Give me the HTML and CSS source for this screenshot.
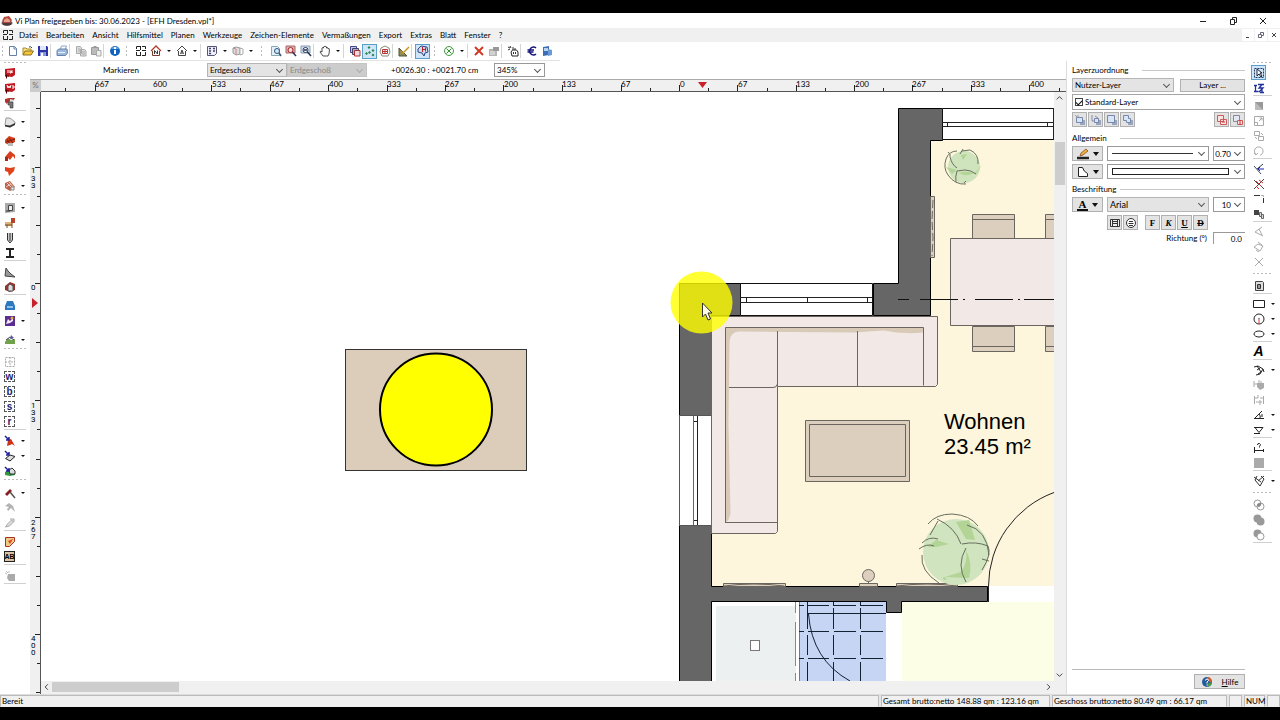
FILE: index.html
```html
<!DOCTYPE html>
<html lang="de">
<head>
<meta charset="utf-8">
<title>Vi Plan - EFH Dresden</title>
<link rel="stylesheet" href="styles.css">
</head>
<body>
<header class="titlebar">
  <svg class="app-icon" viewBox="0 0 12 12"><ellipse cx="6" cy="8" rx="5.5" ry="3" fill="#655"/><path d="M1 6L3 2l5-1 3 4-2 3H3z" fill="#b5483a"/><path d="M3 5l3-2 3 2v2H3z" fill="#e3a18f"/><path d="M2 8h8v2H2z" fill="#4a3a38"/></svg>
  <h1 class="title">Vi Plan freigegeben bis: 30.06.2023 - [EFH Dresden.vpl*]</h1>
  <div class="win-buttons">
    <button aria-label="Minimieren"><svg viewBox="0 0 12 12"><path d="M3 6.500h6" stroke="#222" fill="none"/></svg></button>
    <button aria-label="Wiederherstellen"><svg viewBox="0 0 12 12"><path d="M3.500 4.500h4v5h-4zM5.500 4.500v-2h4v5h-2" stroke="#222" fill="none"/></svg></button>
    <button aria-label="Schließen"><svg viewBox="0 0 12 12"><path d="M3 3l6 6M9 3l-6 6" stroke="#222" fill="none"/></svg></button>
  </div>
</header>
<nav class="menubar">
  <svg class="menu-icon" viewBox="0 0 12 12"><path d="M1.500 4V1.500H5M7 1.500h3.500V4M10.500 7v3.500H7M5 10.500H1.500V7M1 5.500h4M7 5.500h4M5.500 1v4M5.500 7v4" stroke="#222" fill="none"/></svg>
  <button>Datei</button><button>Bearbeiten</button><button>Ansicht</button><button>Hilfsmittel</button><button>Planen</button><button>Werkzeuge</button><button>Zeichen-Elemente</button><button>Vermaßungen</button><button>Export</button><button>Extras</button><button>Blatt</button><button>Fenster</button><button>?</button>
  <div class="mdi-buttons">
    <button aria-label="Fenster minimieren"><svg viewBox="0 0 12 12"><path d="M4 8.500h3" stroke="#444" fill="none"/></svg></button>
    <button aria-label="Fenster wiederherstellen"><svg viewBox="0 0 12 12"><path d="M3.500 5.500h3v3h-3zM5.500 5.500v-2h3v3h-2" stroke="#667" fill="none"/></svg></button>
    <button aria-label="Fenster schließen"><svg viewBox="0 0 12 12"><path d="M4 4l4 4M8 4L4 8" stroke="#444" fill="none"/></svg></button>
  </div>
</nav>
<div class="toolbar" role="toolbar" aria-label="Standard">
  <i class="grip first"></i>
  <button class="tool" aria-label="Neu"><svg viewBox="0 0 12 12"><path d="M2.500 1.500h5l2 2v7h-7z" fill="#fff" stroke="#667fa8"/><path d="M7 1.500v2.500h3" fill="none" stroke="#667fa8"/></svg></button>
  <button class="tool" aria-label="Öffnen"><svg viewBox="0 0 12 12"><path d="M1 10V3h3l1 1h4v2" fill="#fbe38a" stroke="#a88a22"/><path d="M1 10l2-4h8.500L9 10z" fill="#f5c63d" stroke="#8d7320"/><path d="M7 2q2-1 3 1" fill="none" stroke="#345"/></svg></button>
  <button class="tool" aria-label="Speichern"><svg viewBox="0 0 12 12"><path d="M1 1h9l1 1v9H1z" fill="#2c35a8"/><path d="M3 1h6v4H3z" fill="#dfe6fa"/><path d="M3 7h6v4H3z" fill="#8d98d8"/><path d="M4 8h2v3H4z" fill="#fff"/></svg></button>
  <i class="sep"></i>
  <button class="tool" aria-label="Drucken"><svg viewBox="0 0 12 12"><path d="M4 5l1.500-4h5L9 5z" fill="#fff" stroke="#8ba3c8"/><path d="M1 5.500L3 4h8l.5 4-2 2.500H1z" fill="#9db8dd" stroke="#6681aa"/><path d="M2 7.500h7" stroke="#e9f1ff"/></svg></button>
  <i class="sep"></i>
  <button class="tool" aria-label="Kopieren"><svg viewBox="0 0 12 12"><path d="M1.500 1.500h4l1 1v6h-5zM5.500 4.500h4l1.500 1.500v5H5.500z" fill="#ddd" stroke="#aaa"/><path d="M7 7h3M7 9h3M3 4h2M3 6h2" stroke="#aaa"/></svg></button>
  <button class="tool" aria-label="Einfügen"><svg viewBox="0 0 12 12"><path d="M1.500 2.500h7v7h-7z" fill="#bbb" stroke="#999"/><path d="M3.500 1h3v2h-3z" fill="#999"/><path d="M6.500 5.500h4.500v5.500H6.500z" fill="#eee" stroke="#aaa"/></svg></button>
  <i class="sep"></i>
  <button class="tool" aria-label="Info"><svg viewBox="0 0 12 12"><circle cx="6" cy="6" r="5" fill="#1264bd"/><path d="M2 4a4.500 4.500 0 0 1 8 0" fill="#5aa0e4"/><path d="M6 2v2M6 5v4" stroke="#fff" stroke-width="2"/></svg></button>
  <i class="grip"></i>
  <button class="tool" aria-label="Grundriss"><svg viewBox="0 0 12 12"><path d="M1.500 4V1.500H5M7 1.500h3.500V4M10.500 7v3.500H7M5 10.500H1.500V7M1 5.500h4M7 5.500h4M5.500 1v4M5.500 7v4" stroke="#222" fill="none"/></svg></button>
  <button class="tool" aria-label="Nordansicht"><svg viewBox="0 0 12 12"><path d="M1 6l5-5 5 5" fill="none" stroke="#b33b2b" stroke-width="1.300"/><path d="M2.500 6v4.500h7V6" fill="#fff" stroke="#7a3a30"/><path d="M4.500 9V5.500l3 3.500V5.500" fill="none" stroke="#333"/></svg></button>
  <button class="drop" aria-label="Ansichten"></button>
  <button class="tool" aria-label="Alle Ansichten"><svg viewBox="0 0 12 12"><path d="M1 6l5-5 5 5M2.500 6v4.500h7V6M4.500 9l1.500-4 1.500 4M5 8h2" fill="none" stroke="#444"/></svg></button>
  <button class="drop" aria-label="Weitere Ansichten"></button>
  <i class="sep"></i>
  <button class="tool" aria-label="Raster"><svg viewBox="0 0 12 12"><path d="M1.500 1.500h9v7l-2 2h-7z" fill="#eef" stroke="#557"/><path d="M3 3.500h2M7 3.500h2M3 6h2M7 6h2M3 8.500h2" stroke="#446" stroke-width="1.500"/></svg></button>
  <button class="drop" aria-label="Rasteroptionen"></button>
  <button class="tool" aria-label="3D"><svg viewBox="0 0 12 12"><path d="M1 3l3-1 4 1v6l-4 1-3-2z" fill="#ddd" stroke="#999"/><path d="M8 3l3 1v5l-3 1z" fill="#fff" stroke="#aaa"/><path d="M1 3l3 1v6" stroke="#c98a8a" fill="none"/></svg></button>
  <button class="drop wide" aria-label="3D-Optionen"></button>
  <i class="grip"></i>
  <button class="tool" aria-label="Alles zeigen"><svg viewBox="0 0 12 12"><path d="M1.500 1.500h6l2 2v7h-8z" fill="#e6eefa" stroke="#8aa"/><circle cx="7" cy="6" r="2.500" fill="#cfe6fb" stroke="#357"/><path d="M9 8l2 3" stroke="#357" stroke-width="1.500"/></svg></button>
  <button class="tool" aria-label="Vergrößern"><svg viewBox="0 0 12 12"><path d="M1 1h9v7H1z" fill="#d8b0b4" stroke="#a66"/><circle cx="5.500" cy="5" r="2.500" fill="#fbe0e4" stroke="#a22"/><path d="M7.500 7l3.500 4" stroke="#335" stroke-width="1.500"/></svg></button>
  <button class="tool" aria-label="Ausschnitt"><svg viewBox="0 0 12 12"><path d="M1 1h9v7H1z" fill="#cfe0f2" stroke="#89a"/><circle cx="5.500" cy="5" r="2.500" fill="#fff" stroke="#235"/><path d="M4 5h3M7.500 7l3.500 4" stroke="#235" stroke-width="1.500"/></svg></button>
  <i class="sep"></i>
  <button class="tool" aria-label="Verschieben"><svg viewBox="0 0 12 12"><path d="M4 11L1 7q0-1.500 2 0V3q1-1 1.500 0V2q1-1.500 1.500 0 1-1.500 1.500 0v1q1-1 1.500 0v1q1.500-1 1.500 .5L10 9l-1 2z" fill="#fff" stroke="#222" stroke-width=".8"/></svg></button>
  <button class="drop" aria-label="Verschiebeoptionen"></button>
  <i class="sep"></i>
  <button class="tool" aria-label="Layer"><svg viewBox="0 0 12 12"><path d="M1.500 1.500h6v6h-6z" fill="#c7c7ea" stroke="#448"/><path d="M3.500 3.500h6v6h-6z" fill="#aac" stroke="#446"/><path d="M5.500 5.500h5.500v5.500H5.500z" fill="#f2d8dc" stroke="#a33"/></svg></button>
  <button class="tool on" aria-label="Fangpunkte"><svg viewBox="0 0 12 12"><path d="M5 1l1.500 1.500L5 4 3.500 2.500zM2.500 7L4 8.500 2.500 10 1 8.500zM9 4l1.500 1.500L9 7 7.500 5.500zM9 8.500l1.500 1.500L9 11.500 7.500 10zM5.500 6L7 7.500 5.500 9 4 7.500z" fill="#27864a"/></svg></button>
  <button class="tool" aria-label="Umriss"><svg viewBox="0 0 12 12"><path d="M6 1l4 2 1 4-2 4H3L1 7l1-4z" fill="none" stroke="#887"/><path d="M3.500 4.500h5v4h-5zM6 4.500v4M4 6.500h4" fill="none" stroke="#b33"/></svg></button>
  <i class="sep"></i>
  <button class="tool" aria-label="Messen"><svg viewBox="0 0 12 12"><path d="M1 3v8h8z" fill="#8b8b5c" stroke="#553"/><path d="M3 6l2 2 6-6" fill="none" stroke="#c9951c" stroke-width="1.500"/></svg></button>
  <i class="sep"></i>
  <button class="tool on" aria-label="3D-Körper"><svg viewBox="0 0 12 12"><path d="M1 4l3-3 6 1 1 5-3 1-1 3-2-3-4-1z" fill="#cfdcf0" stroke="#348"/><path d="M5.500 2v5M5 4.500h4M8.500 2.500v4" stroke="#b22" fill="none"/></svg></button>
  <i class="grip"></i>
  <button class="tool" aria-label="Symbol"><svg viewBox="0 0 12 12"><circle cx="6" cy="6" r="4.500" fill="#f2fff2" stroke="#4a9a4a"/><path d="M3.500 3.500l5 5M8.500 3.500l-5 5" stroke="#3c8c3c"/></svg></button>
  <button class="drop" aria-label="Symboloptionen"></button>
  <i class="sep"></i>
  <button class="tool" aria-label="Löschen"><svg viewBox="0 0 12 12"><path d="M2 2l8 8M10 2L2 10" stroke="#cf3a26" stroke-width="2" fill="none"/></svg></button>
  <button class="tool" aria-label="Eigenschaften"><svg viewBox="0 0 12 12"><path d="M1 4h8v7H1z" fill="#b5b5b5"/><path d="M5 2h6v4H5z" fill="#999"/><path d="M2 7h5M2 9h5" stroke="#eee"/></svg></button>
  <i class="sep"></i>
  <button class="tool" aria-label="Hand"><svg viewBox="0 0 12 12"><path d="M5 11L4 7l1.500-2h4L11 7v4z" fill="#fff" stroke="#222"/><path d="M1 2l2 1M3 1l1 2M1 5l2-1M6 5V2M8 5V3M6.500 7v2M8.500 7v2" stroke="#333"/></svg></button>
  <i class="sep"></i>
  <button class="tool" aria-label="Kosten"><svg viewBox="0 0 12 12"><path d="M10 3a3.800 4 0 1 0 0 6M1.500 5h6.500M1.500 7h6" fill="none" stroke="#16167c" stroke-width="1.500"/></svg></button>
  <button class="tool" aria-label="Raumbuch"><svg viewBox="0 0 12 12"><path d="M2 2l6-1v9l-6 1z" fill="#3d6fb4"/><path d="M3 3h4v3H3z" fill="#b8d3ef"/><path d="M7 4l4 1v5l-4 1z" fill="#6b9ad6"/></svg></button>
</div>
<main class="workspace">
  <div class="sidebar" role="toolbar" aria-label="Bauteile">
    <i class="hgrip"></i>
    <div class="row"><button class="tool" aria-label="Außenwand"><svg viewBox="0 0 12 12"><path d="M1 2l10-1v7l-3 2-7-1z" fill="#c41820"/><path d="M4 3v3M6 3v3h1V4l1 2V3" stroke="#fff" fill="none"/><path d="M1 9h4M2.500 7.500v4" stroke="#500"/></svg></button></div>
    <div class="row"><button class="tool" aria-label="Innenwand"><svg viewBox="0 0 12 12"><path d="M1 2l10-1v7l-3 2-7-1z" fill="#c41820"/><path d="M3 3l1 3 1-2 1 2 1-3M8 6h2V4H8" stroke="#fff" fill="none"/><path d="M1 9h4M2.500 7.500v4" stroke="#500"/></svg></button></div>
    <div class="row"><button class="tool" aria-label="Durchbruch"><svg viewBox="0 0 12 12"><path d="M1 2l4-1h6L9 4 4 5 3 7 1 5z" fill="#b0332c"/><path d="M6 2l4 1-1 2H6z" fill="#ddd"/><path d="M4 5h5v6H6V8H4z" fill="#777" stroke="#333" stroke-width=".6"/></svg></button></div>
    <i class="hsep"></i>
    <div class="row"><button class="tool" aria-label="Decke"><svg viewBox="0 0 12 12"><path d="M1 9l1-7h4l5 4v2l-5 3z" fill="#e4e4e4" stroke="#999"/><path d="M1 9l5 .5L11 7v2l-5 2.500-5-1z" fill="#333"/></svg></button><button class="drop" aria-label="Mehr"></button></div>
    <i class="hsep blank"></i>
    <div class="row"><button class="tool" aria-label="Dach"><svg viewBox="0 0 12 12"><path d="M1 5l4-4 6 2v4L5 10 1 8z" fill="#d2421e"/><path d="M3 4l3 5M5 3l4 5M2 7l9-3" stroke="#7b1e10"/><path d="M4 8h5v3H4z" fill="#bbb"/></svg></button><button class="drop" aria-label="Mehr"></button></div>
    <div class="row"><button class="tool" aria-label="Gaube"><svg viewBox="0 0 12 12"><path d="M1 7l5-6 5 4v4L9 6l-3 4-2-2-3 2z" fill="#d7401e"/><path d="M1 7h3v4H1z" fill="#9b2d18"/></svg></button><button class="drop" aria-label="Mehr"></button></div>
    <div class="row"><button class="tool" aria-label="Dachfläche"><svg viewBox="0 0 12 12"><path d="M1 2l5 1 5-1-1 4-5 5-1-4-3-1z" fill="#e0431b"/></svg></button></div>
    <div class="row"><button class="tool" aria-label="Dachöffnung"><svg viewBox="0 0 12 12"><path d="M1 3l5-2 5 6-5 4-5-3z" fill="#bf6149"/><path d="M3 3l4 4M5 2l5 6M2 7l5-3" stroke="#ead0c6"/><path d="M7 7h3v3H7z" fill="#eee" stroke="#888"/></svg></button><button class="drop" aria-label="Mehr"></button></div>
    <i class="hgrip"></i>
    <div class="row"><button class="tool" aria-label="Fenster"><svg viewBox="0 0 12 12"><path d="M1 1h10v9L1 11z" fill="#aaa"/><path d="M4.500 3.500h4v5h-4z" fill="#eee" stroke="#444"/><path d="M2 9h4" stroke="#333"/></svg></button><button class="drop" aria-label="Mehr"></button></div>
    <div class="row"><button class="tool" aria-label="Treppe"><svg viewBox="0 0 12 12"><path d="M1 5h7v4H1z" fill="#dcb37b"/><path d="M7 1h4v5H7z" fill="#b5442a"/><path d="M1 8h7M3 8v3M8 6v5" stroke="#7c4a20"/></svg></button></div>
    <div class="row"><button class="tool" aria-label="Schornstein"><svg viewBox="0 0 12 12"><path d="M3.500 1v7L6 11l2.500-3V1M6 1v8" fill="#ccc" stroke="#333"/></svg></button></div>
    <div class="row"><button class="tool" aria-label="Träger"><svg viewBox="0 0 12 12"><path d="M2 2h8M2 10h8M6 2v8" stroke="#222" stroke-width="2"/></svg></button></div>
    <i class="hsep"></i>
    <div class="row"><button class="tool" aria-label="Gelände"><svg viewBox="0 0 12 12"><path d="M1 10l1-8 2 3 3 3 4 3z" fill="#999" stroke="#444"/></svg></button></div>
    <div class="row"><button class="tool" aria-label="Raum"><svg viewBox="0 0 12 12"><path d="M1 5l5-4 5 2v6l-5 2-5-2z" fill="#93332b"/><path d="M4 10V5l2-2 3 2v5z" fill="#ddd" stroke="#555"/></svg></button></div>
    <i class="hsep"></i>
    <div class="row"><button class="tool" aria-label="Möbel"><svg viewBox="0 0 12 12"><path d="M3 1h6l2 5v4H1V6z" fill="#2e78bd"/><path d="M3 6h6v2H3z" fill="#8fc1ee"/></svg></button></div>
    <div class="row"><button class="tool" aria-label="Textur"><svg viewBox="0 0 12 12"><path d="M1 1h10v10H1z" fill="#5b2d91"/><path d="M2 9l2-5 2 2 3-3v3L6 8z" fill="#f1e9ff"/><circle cx="8" cy="3" r="1.500" fill="#e7a92d"/></svg></button><button class="drop" aria-label="Mehr"></button></div>
    <i class="hsep blank"></i>
    <div class="row"><button class="tool" aria-label="Landschaft"><svg viewBox="0 0 12 12"><path d="M1 8l3-4 3 2 4-1v5H1z" fill="#6fa24a"/><path d="M2 6l4-3 4 3" stroke="#546" fill="none"/><path d="M7 1l3 3-4 1z" fill="#55a"/></svg></button><button class="drop" aria-label="Mehr"></button></div>
    <i class="hgrip"></i>
    <div class="row"><button class="tool" aria-label="Gitter"><svg viewBox="0 0 12 12"><path d="M1.500 1.500h9v9h-9zM1 6h10M6 1v10" fill="none" stroke="#aaa" stroke-dasharray="2 1"/></svg></button></div>
    <div class="row"><button class="tool boxed" aria-label="Wand bearbeiten">w</button></div>
    <div class="row"><button class="tool boxed" aria-label="Bauteil bearbeiten">b</button></div>
    <div class="row"><button class="tool boxed" aria-label="Symbol bearbeiten">s</button></div>
    <div class="row"><button class="tool boxed" aria-label="Raum bearbeiten">r</button></div>
    <i class="hsep"></i>
    <div class="row"><button class="tool" aria-label="Dach wählen"><svg viewBox="0 0 12 12"><path d="M3 11l1-6 3-1 4 7-3-2-2 1z" fill="#cf3018"/><path d="M1 1l4 4M5 2v3H2" stroke="#22229a" stroke-width="1.500" fill="none"/></svg></button><button class="drop" aria-label="Mehr"></button></div>
    <div class="row"><button class="tool" aria-label="Decke wählen"><svg viewBox="0 0 12 12"><path d="M1.500 8.500L6 5l5 1.500L6 11z" fill="#ddd" stroke="#222"/><path d="M1 1l4 4M5 2v3H2" stroke="#22229a" stroke-width="1.500" fill="none"/></svg></button><button class="drop" aria-label="Mehr"></button></div>
    <div class="row"><button class="tool" aria-label="Gelände wählen"><svg viewBox="0 0 12 12"><path d="M1 7l5-3 5 2v4l-5 1-5-1z" fill="#2e9a3d"/><path d="M5 5l3-2 3 3v3H6z" fill="#ddd" stroke="#333"/><path d="M1 2l4 4M5 3v3H2" stroke="#22229a" stroke-width="1.500" fill="none"/></svg></button></div>
    <i class="hgrip"></i>
    <div class="row"><button class="tool" aria-label="Hammer"><svg viewBox="0 0 12 12"><path d="M1 7l5-5 2 2-5 5z" fill="#8e1d22"/><path d="M6 5l5 6" stroke="#555" stroke-width="1.500"/></svg></button><button class="drop" aria-label="Mehr"></button></div>
    <div class="row"><button class="tool" aria-label="Trennen"><svg viewBox="0 0 12 12"><path d="M1 4l4-3 4 3 2 6-4-4-3 3-1-2 2-2z" fill="#b3b3b3"/></svg></button></div>
    <div class="row"><button class="tool" aria-label="Verbinden"><svg viewBox="0 0 12 12"><path d="M1.500 10l2-3 4-4 2 2-4 4zM6 2h4v3" stroke="#aaa" fill="#ddd"/></svg></button></div>
    <i class="hsep"></i>
    <div class="row"><button class="tool" aria-label="Fläche"><svg viewBox="0 0 12 12"><path d="M1.500 1.500h9v4l-5 5h-4z" fill="#f0c987" stroke="#a63322"/><path d="M4 5l5-2-3 5z" fill="#d84c24"/></svg></button></div>
    <div class="row"><button class="tool ab" aria-label="Beschriften">AB</button></div>
    <i class="hsep"></i>
    <div class="row"><button class="tool" aria-label="Schieben"><svg viewBox="0 0 12 12"><path d="M4 4h7v7H5L3 8z" fill="#aaa"/><path d="M1 3l2 1M2 1l2 2M5 1v2" stroke="#bbb"/></svg></button></div>
    <i class="hsep"></i>
  </div>

  <section class="center">
    <div class="options">
      <span class="mode">Markieren</span>
      <span class="pick floor"><select aria-label="Geschoß"><option>Erdgeschoß</option></select></span>
      <span class="pick floor off"><select aria-label="Vergleichsgeschoß" disabled><option>Erdgeschoß</option></select></span>
      <output class="coords">+0026.30 : +0021.70 cm</output>
      <span class="pick white zoom"><select aria-label="Zoom"><option>345%</option></select></span>
    </div>
    <div class="board">
      <div class="corner">%</div>
      <svg class="ruler-h" aria-label="Lineal waagerecht">
        <g transform="translate(-41 -80)">
          <path d="M65.500 92v-4M124.500 92v-4M182.500 92v-4M240.500 92v-4M299.500 92v-4M357.500 92v-4M416.500 92v-4M474.500 92v-4M533.500 92v-4M591.500 92v-4M650.500 92v-4M708.500 92v-4M767.500 92v-4M825.500 92v-4M883.500 92v-4M942.500 92v-4M1000.500 92v-4M1059.500 92v-4" class="tick"/>
          <path d="M95.500 92v-7M211.500 92v-7M270.500 92v-7M328.500 92v-7M387.500 92v-7M445.500 92v-7M503.500 92v-7M562.500 92v-7M621.500 92v-7M679.500 92v-7M737.500 92v-7M796.500 92v-7M854.500 92v-7M912.500 92v-7M971.500 92v-7M1029.500 92v-7" class="tick"/>
          <g class="scale"><text x="95" y="87">667</text><text x="153" y="87">600</text><text x="212" y="87">533</text><text x="270" y="87">467</text><text x="329" y="87">400</text><text x="387" y="87">333</text><text x="445" y="87">267</text><text x="504" y="87">200</text><text x="562" y="87">133</text><text x="621" y="87">67</text><text x="680" y="87">0</text><text x="738" y="87">67</text><text x="796" y="87">133</text><text x="855" y="87">200</text><text x="912" y="87">267</text><text x="971" y="87">333</text><text x="1030" y="87">400</text></g>
          <path d="M698 82h9l-4.500 6z" fill="#c8202a"/>
        </g>
      </svg>
      <svg class="ruler-v" aria-label="Lineal senkrecht">
        <g transform="translate(-30 -92)">
          <path d="M41 108.500h-5M41 137.500h-4M41 167.500h-6M41 196.500h-4M41 225.500h-5M41 254.500h-4M41 283.500h-6M41 313.500h-4M41 342.500h-5M41 371.500h-4M41 400.500h-6M41 429.500h-4M41 459.500h-5M41 488.500h-4M41 517.500h-6M41 546.500h-4M41 576.500h-5M41 605.500h-4M41 634.500h-6M41 663.500h-4M41 692.500h-5" class="tick"/>
          <g class="scale upright"><text y="173"><tspan x="31">1</tspan><tspan x="31" dy="8">3</tspan><tspan x="31" dy="7">3</tspan></text><text x="31" y="290">0</text><text y="408"><tspan x="31">1</tspan><tspan x="31" dy="7">3</tspan><tspan x="31" dy="7">3</tspan></text><text y="525"><tspan x="31">2</tspan><tspan x="31" dy="7">6</tspan><tspan x="31" dy="7">7</tspan></text><text y="641"><tspan x="31">4</tspan><tspan x="31" dy="7">0</tspan><tspan x="31" dy="7">0</tspan></text></g>
          <path d="M32 298v10l6-5z" fill="#c8202a"/>
        </g>
      </svg>
      <svg class="plan" aria-label="Grundriss EFH Dresden">
        <g transform="translate(-41 -92)" fill="none" stroke-width="1">
          <rect x="345.500" y="349.500" width="181" height="121" fill="#dccdbb" stroke="#333"/>
          <circle cx="436" cy="409.500" r="56" fill="#ff0" stroke="#000" stroke-width="2"/>

          <path d="M930 140h124v446H711V315h219z" fill="#fdf5dc"/>
          <path d="M902 602h152v79H902z" fill="#fcfee6"/>
          <path d="M716 606h80v75h-80z" fill="#ecf0f1"/>
          <path d="M799 602h87v79h-87z" fill="#c5d5f3"/>
          <path d="M795.500 602v11M795.500 622v44M795.500 673v8" stroke="#888"/><path d="M799.500 602v79" stroke="#778"/>
          <path d="M799 605.500h5M808 605.500h21M834 605.500h22M861 605.500h22M799 631.500h5M808 631.500h21M834 631.500h22M861 631.500h22M799 658.500h5M808 658.500h21M834 658.500h22M861 658.500h22M807.500 602v27M807.500 635v20M807.500 662v19M833.500 602v4M833.500 608v21M833.500 635v20M833.500 662v19M860.500 602v4M860.500 608v21M860.500 635v20M860.500 662v19" stroke="#123"/>
          <path d="M808 613.500h78M808.500 614Q812 660 850 681" stroke="#123"/>
          <rect x="750.500" y="640.500" width="9" height="10" stroke="#777" fill="#fff"/>

          <path d="M898.500 108.500h44v32h-12v175h-57v-32h25zM679.500 283.500h61v32h-29v100h-32zM679.500 683V525.500h32v61h276v15h-86v11h-15v-11h-175V683z" fill="#666" stroke="#000"/>
          <path d="M942.500 108.500h111v31h-111zM740.500 283.500h132v32h-132z" fill="#fff" stroke="#111"/>
          <path d="M679.500 415.500h32v110h-32z" fill="#fff" stroke="#555"/>
          <path d="M942 122.500h111M942 126.500h111M947.500 122v5M1047.500 122v5M1053.500 108v32M740 297.500h132M740 302.500h132M746.500 297v5M807.500 297v5M867.500 297v5M697.500 416v109M693 421.500h5M693 520.500h5" stroke="#222"/>
          <path d="M693.500 416v109" stroke="#666"/>

          <g stroke="#6b655f">
            <path d="M930.500 196.500h4v61h-4z" fill="#dccfbd"/><path d="M933 200l-1 20 1 18-1 18" stroke-dasharray="8 3"/>
            <path d="M972.500 214.500h42v24h-42zM972 219.500h43M1045.500 214.500h12v24h-12zM1045 219.500h12M972.500 326.500h42v25h-42zM972 346.500h43M1045.500 326.500h12v25h-12zM1045 346.500h12" fill="#dccfbd"/>
            <path d="M950.500 238.500h106v87h-106z" fill="#f2e9e7"/>
            <path d="M711.500 316.500h226v68l-2 2h-158v145l-2 2h-64z" fill="#f2e9e7"/>
            <path d="M725.500 522V327.500h198v5q-20 2-40-2l-30 2-112-1q-12-1-12 12l-1 80 2 90q-2 8-4 8z" fill="#d9cab8" stroke="none"/>
            <path d="M725.500 522.500v-195h198v58M725 522.500h52M777.500 331v55M857.500 331v55M729 387.500h44q4 0 4-3"/>
            <path d="M805.500 420.500h104v61h-104zM809.500 424.500h96v52h-96z" fill="#dccfbd"/>
            <path d="M723.500 583.500h62v3h-62zM896.500 583.500h61v3h-61zM859.500 583.500h18v3h-18z" fill="#dccfbd"/>
            <path d="M724 586q30-4 60 0M897 586q30-4 60 0M868.500 581v3"/>
            <circle cx="868.500" cy="575.500" r="6" fill="#dccfbd"/>
          </g>

          <circle cx="964" cy="167" r="16" fill="#cfe3bc"/>
          <path d="M961 155l6-1-4 6zM946 167l11 3-5 4zM959 173q9-3 17 1l6-9-6 7q-8 6-17 1z" fill="#b2d495"/>
          <path d="M957 151q-8 0-11 8-3 9 2 16 7 10 18 9M948 152q3 2 2 5 2 8 7 11M960 154l3-5M962 151l8-1q9 4 8 14M957 171l8-1q6 0 11 4M957 171q-2 6-1 11M964 183l2-2" stroke="#67705f"/>

          <circle cx="956" cy="552" r="33" fill="#d0e4bf"/>
          <path d="M956 522l13-2 6 20-9-1zM928 547l8-7 13 4-13 3zM966 550q7 14 3 28l-24-1 16-5q7-10 5-22zM945 577q-6 2 2 3z" fill="#b2d495"/>
          <path d="M928 524q8-10 24-10 18 1 26 12M937 519q18 8 24 25M930 535l8-14M922 543q7-7 16-4M919 549q8-6 15-3M962 544q14-3 26 2 4 8-6 24M966 548q-10 17 0 34M922 555q-2 16 17 28M967 525q20 5 22 30M982 559l7 2" stroke="#666e5c"/>
          <path d="M988.500 586A100 100 0 0 1 1054 492.500M988.500 586v16" stroke="#222"/>
          <path d="M898 299.500h11M920 299.500h38M963 299.500h2M975 299.500h38M1018 299.500h2M1024 299.500h31" stroke="#111"/>
          <g class="room"><text x="944" y="429">Wohnen</text><text x="944" y="454">23.45 m²</text></g>

          <circle cx="701.500" cy="302.500" r="31" fill="#ff0" fill-opacity=".8"/>
          <path d="M702.500 303v14l3-3 2.500 6 2.500-1-2.500-6h4z" fill="#fffbe0" stroke="#333"/>
        </g>
      </svg>
      <div class="scroll-v" aria-hidden="true"><svg viewBox="0 0 12 12"><path d="M3 7.500l3-3 3 3"/></svg><i class="thumb-v"></i><svg viewBox="0 0 12 12"><path d="M3 4.500l3 3 3-3"/></svg></div>
      <div class="scroll-h" aria-hidden="true"><svg viewBox="0 0 12 12"><path d="M7.500 3l-3 3 3 3"/></svg><i class="thumb-h"></i><svg viewBox="0 0 12 12"><path d="M4.500 3l3 3-3 3"/></svg></div>
    </div>
  </section>

  <aside class="props">
    <h2 class="group wide">Layerzuordnung</h2>
    <div class="line gap6">
      <span class="pick grow"><select aria-label="Layertyp"><option>Nutzer-Layer</option></select></span>
      <button class="btn layer">Layer ...</button>
    </div>
    <div class="combo"><input type="checkbox" id="std" checked><label for="std">Standard-Layer</label></div>
    <div class="line icons">
      <button class="btn sq" aria-label="Nach vorn"><svg viewBox="0 0 12 12"><path d="M6 6h5v5H6z" fill="#99a4c0"/><path d="M2.500 3.500h6v5h-6z" fill="#d9e4f6" stroke="#7788ad"/><path d="M1 1l2 2M4 1v2" stroke="#99a"/></svg></button>
      <button class="btn sq" aria-label="Nach oben"><svg viewBox="0 0 12 12"><path d="M6 6h5v5H6z" fill="#99a4c0"/><path d="M4.500 4.500h4v4h-4z" fill="#d9e4f6" stroke="#7788ad"/><path d="M2 1v6h3M5 2l3 2" fill="none" stroke="#88a"/></svg></button>
      <button class="btn sq" aria-label="Nach unten"><svg viewBox="0 0 12 12"><path d="M6 6h5v5H6z" fill="#99a4c0"/><path d="M1.500 1.500h7v7h-7z" fill="#d9e4f6" stroke="#7788ad"/></svg></button>
      <button class="btn sq" aria-label="Nach hinten"><svg viewBox="0 0 12 12"><path d="M6 6h5v5H6z" fill="#99a4c0"/><path d="M1.500 1.500h5v3h2v4h-4v-2h-3z" fill="#d9e4f6" stroke="#7788ad"/></svg></button>
      <i class="fill"></i>
      <button class="btn sq" aria-label="Gruppieren"><svg viewBox="0 0 12 12"><path d="M1.500 1.500h6v6h-6zM4.500 5.500h6v5h-6z" fill="#fbe3e3" stroke="#cc5b5b"/><path d="M6 8h3" stroke="#c33"/></svg></button>
      <button class="btn sq" aria-label="Gruppe auflösen"><svg viewBox="0 0 12 12"><path d="M1.500 1.500h6v6h-6z" fill="#e3e8f6" stroke="#889"/><path d="M5.500 6.500h5v4h-5z" fill="#fbe3e3" stroke="#cc5b5b"/><path d="M8 6v5" stroke="#c33"/></svg></button>
    </div>
    <h2 class="group">Allgemein</h2>
    <div class="line gap4">
      <button class="btn split" aria-label="Linienfarbe"><svg viewBox="0 0 12 12"><path d="M3 8l1-3 5-4 2 2-5 4z" fill="#e8b53a" stroke="#8a3b22" stroke-width=".7"/><path d="M0 10h12" stroke="#222" stroke-width="2.500"/></svg></button>
      <span class="pick white grow"><select aria-label="Linienart"><option></option></select><i class="stroke"></i></span>
      <span class="pick white num"><select aria-label="Linienstärke"><option>0.70</option></select></span>
    </div>
    <div class="line gap4">
      <button class="btn split" aria-label="Füllung"><svg viewBox="0 0 12 12"><path d="M1.500 10.500v-9h4q1 4 5 6v3z" fill="#fff" stroke="#222"/></svg></button>
      <span class="pick white grow"><select aria-label="Füllart"><option></option></select><i class="swatch"></i></span>
    </div>
    <h2 class="group">Beschriftung</h2>
    <div class="line gap4">
      <button class="btn split letter" aria-label="Schriftfarbe"><b>A</b></button>
      <span class="pick grow font"><select aria-label="Schriftart"><option>Arial</option></select></span>
      <span class="pick white num"><select aria-label="Schriftgröße"><option>10</option></select></span>
    </div>
    <div class="line styles">
      <button class="btn sq" aria-label="Rahmen"><svg viewBox="0 0 12 12"><path d="M1.500 2.500h9v7h-9zM3.500 2.500v7M8.500 2.500v7M4 4.500h4M4 6.500h4" fill="#eee" stroke="#333"/></svg></button>
      <button class="btn sq" aria-label="Kreis"><svg viewBox="0 0 12 12"><circle cx="6" cy="6" r="4.500" fill="#fff" stroke="#333"/><path d="M4 4.500h4M3.500 6.500h5M4 8.500h4" stroke="#333"/></svg></button>
      <i class="gap"></i>
      <button class="btn sq bold" aria-label="Fett">F</button>
      <button class="btn sq bold ital" aria-label="Kursiv">K</button>
      <button class="btn sq bold under" aria-label="Unterstrichen">U</button>
      <button class="btn sq bold strike" aria-label="Durchgestrichen">D</button>
    </div>
    <div class="line angle"><label for="dir">Richtung (°)</label><input id="dir" type="text" value="0.0"></div>
    <div class="help"><button class="btn"><svg viewBox="0 0 12 12"><circle cx="6" cy="6" r="5" fill="#235a9a"/><path d="M6 1a5 5 0 0 1 5 5H8z" fill="#d85a28"/><path d="M11 6a5 5 0 0 1-5 5V8z" fill="#4a9a3d"/><path d="M4.500 4.500q0-1.500 1.500-1.500t1.500 1.500L6 6v1.500M6 8.500v1" fill="none" stroke="#fff"/></svg><span><u>H</u>ilfe</span></button></div>
  </aside>

  <div class="sidebar right" role="toolbar" aria-label="Zeichnen">
    <i class="hgrip"></i>
    <div class="row"><button class="tool on" aria-label="Auswahl"><svg viewBox="0 0 12 12"><path d="M1.500 1.500h9v9h-9z" fill="none" stroke="#223a66" stroke-dasharray="2 1"/><path d="M4 2v7l2-2 2 3 1-1-2-3h2z" fill="#fff" stroke="#223"/></svg></button></div>
    <div class="row"><button class="tool" aria-label="Auswahl erweitert"><svg viewBox="0 0 12 12"><path d="M2.500 3.500v6h3M1 3.500h3M1 9.500h3M5 2.500h6M9.500 2L6 6l4 0-4 4M9 7v4M7 10.500h4" fill="none" stroke="#20309a" stroke-width="1.300"/></svg></button></div>
    <i class="hsep"></i>
    <div class="row"><button class="tool" aria-label="Verlauf"><svg viewBox="0 0 12 12"><path d="M2 2h8v8H2z" fill="#bbb"/><path d="M2 2l8 8V2z" fill="#999"/></svg></button></div>
    <div class="row"><button class="tool" aria-label="Skalieren"><svg viewBox="0 0 12 12"><path d="M1.500 1.500h9v9h-9zM1.500 7.500h3v3M6 6l3-3M6.500 3H9v2.500" fill="none" stroke="#aaa"/></svg></button></div>
    <div class="row"><button class="tool" aria-label="Kopie"><svg viewBox="0 0 12 12"><path d="M1.500 1.500h5v4h-5zM5.500 6.500h5v4h-5zM2 7l2 2M8 3l2 2" fill="none" stroke="#aaa"/></svg></button></div>
    <div class="row"><button class="tool" aria-label="Drehen"><svg viewBox="0 0 12 12"><path d="M3 9.500A4.300 4.300 0 1 1 7 10.300M1 8l2 2 2-2" fill="none" stroke="#aaa"/></svg></button></div>
    <i class="hsep"></i>
    <div class="row"><button class="tool" aria-label="Winkel"><svg viewBox="0 0 12 12"><path d="M1 3l7 8M10 1L4 6" fill="none" stroke="#345"/><path d="M11 6H5M7 4L5 6l2 2" fill="none" stroke="#22a"/></svg></button></div>
    <div class="row"><button class="tool" aria-label="Schneiden"><svg viewBox="0 0 12 12"><path d="M1 2l4 4M8 8l3 3M1 11L11 1" fill="none" stroke="#444"/><path d="M3 3l6 6M3 8l3 3M6 2l4 3" stroke="#c33"/></svg></button></div>
    <div class="row"><button class="tool" aria-label="Ecke"><svg viewBox="0 0 12 12"><path d="M1 2.500h6M10.500 5v5" fill="none" stroke="#333"/><path d="M8 2.500h2.500V4" fill="none" stroke="#aaa"/></svg></button></div>
    <div class="row"><button class="tool" aria-label="Reihe"><svg viewBox="0 0 12 12"><path d="M1 2h5v5H1z" fill="#444"/><path d="M6.500 4.500h2v4h-2zM8.500 6.500h2v4h-2z" fill="#ddd" stroke="#666"/></svg></button></div>
    <i class="hsep"></i>
    <div class="row"><button class="tool" aria-label="Teilen"><svg viewBox="0 0 12 12"><path d="M2 6l7-5M2 6l8 4M6 3l3 6" fill="none" stroke="#aaa"/></svg></button></div>
    <div class="row"><button class="tool" aria-label="Form"><svg viewBox="0 0 12 12"><path d="M1 6l4-3 5 2-3 5zM5 1l4 3M3 9l3 2" fill="none" stroke="#aaa"/></svg></button></div>
    <div class="row"><button class="tool" aria-label="Entfernen"><svg viewBox="0 0 12 12"><path d="M2 2l8 8M10 2l-8 8" fill="none" stroke="#aaa"/></svg></button></div>
    <i class="hgrip"></i>
    <div class="row"><button class="tool" aria-label="Plan"><svg viewBox="0 0 12 12"><path d="M2.500 1.500h7l1 1v8h-8z" fill="#ddd" stroke="#444"/><path d="M4.500 4.500h3v4h-3zM6 4v4" fill="#fff" stroke="#333"/></svg></button></div>
    <i class="hsep"></i>
    <div class="row"><button class="tool" aria-label="Rechteck"><svg viewBox="0 0 12 12"><path d="M.5 2.500h11v7H.5z" fill="none" stroke="#222"/></svg></button><button class="drop" aria-label="Mehr"></button></div>
    <div class="row"><button class="tool" aria-label="Kreis"><svg viewBox="0 0 12 12"><circle cx="6" cy="6" r="5" fill="none" stroke="#222"/><path d="M6 6v5" stroke="#c44"/><path d="M6 5v1" stroke="#222"/></svg></button><button class="drop" aria-label="Mehr"></button></div>
    <div class="row"><button class="tool" aria-label="Ellipse"><svg viewBox="0 0 12 12"><ellipse cx="6" cy="6" rx="5" ry="3" fill="none" stroke="#222"/></svg></button><button class="drop" aria-label="Mehr"></button></div>
    <i class="hsep"></i>
    <div class="row"><button class="tool text-a" aria-label="Text">A</button></div>
    <i class="hsep"></i>
    <div class="row"><button class="tool" aria-label="Maßkette"><svg viewBox="0 0 12 12"><path d="M1 3l4-1 5 3-3 5-4 1M4 2l4 6M10 5l1 3M7 4L4 6M5 10l3-2" fill="none" stroke="#222"/></svg></button><button class="drop" aria-label="Mehr"></button></div>
    <div class="row"><button class="tool" aria-label="Maß schieben"><svg viewBox="0 0 12 12"><path d="M4 4h7v5l-4 2-3-3z" fill="#aaa"/><path d="M1 2v6M1 5h4M6 1v3M8 2v2" stroke="#aaa"/></svg></button></div>
    <div class="row"><button class="tool" aria-label="Maß bearbeiten"><svg viewBox="0 0 12 12"><path d="M1.500 2v8M10.500 2v8M1 4h4M7 4h4M3 8h6M5 1v3M7 6v5" stroke="#aaa" fill="none"/></svg></button></div>
    <div class="row"><button class="tool" aria-label="Winkelmaß"><svg viewBox="0 0 12 12"><path d="M1 9.500h10M2 9l7-7M6 5q2 2 1 4M9 5v3" fill="none" stroke="#222"/></svg></button><button class="drop" aria-label="Mehr"></button></div>
    <div class="row"><button class="tool" aria-label="Höhenmaß"><svg viewBox="0 0 12 12"><path d="M1 3.500h9l-4 5-4-5M1 9.500h6" fill="none" stroke="#222"/></svg></button><button class="drop" aria-label="Mehr"></button></div>
    <i class="hsep"></i>
    <div class="row"><button class="tool" aria-label="Abstand"><svg viewBox="0 0 12 12"><path d="M1.500 5v6M1 8.500h10M10.500 7v3M4.500 3q0-2 2-1.500t0 3v1" fill="none" stroke="#222"/></svg></button></div>
    <div class="row"><button class="tool" aria-label="Schraffur"><svg viewBox="0 0 12 12"><path d="M1 1h10v10H1z" fill="#aaa"/></svg></button></div>
    <i class="hsep"></i>
    <div class="row"><button class="tool" aria-label="Hilfslinien"><svg viewBox="0 0 12 12"><path d="M1 2l7 5M4 1L2 5l5 6M8 1l3 3-4 7M11 1L5 6" fill="none" stroke="#333"/></svg></button><button class="drop" aria-label="Mehr"></button></div>
    <i class="hgrip"></i>
    <div class="row"><button class="tool" aria-label="Schnittmenge"><svg viewBox="0 0 12 12"><circle cx="4.500" cy="4.500" r="3.500" fill="none" stroke="#999"/><circle cx="7.500" cy="7.500" r="3.500" fill="none" stroke="#999"/><path d="M4 7q0-3 4-3 0 4-4 3" fill="#888"/></svg></button></div>
    <div class="row"><button class="tool" aria-label="Vereinigung"><svg viewBox="0 0 12 12"><circle cx="4.500" cy="4.500" r="4" fill="#999"/><circle cx="7.500" cy="7.500" r="4" fill="#999"/></svg></button></div>
    <div class="row"><button class="tool" aria-label="Differenz"><svg viewBox="0 0 12 12"><circle cx="4.500" cy="4.500" r="4" fill="#999"/><circle cx="7.500" cy="7.500" r="3.500" fill="#fff" stroke="#999"/></svg></button></div>
    <i class="hsep"></i>
  </div>
</main>
<footer class="status">
  <span class="cell grow">Bereit</span>
  <span class="cell total">Gesamt brutto:netto 148.88 qm : 123.16 qm</span>
  <span class="cell storey">Geschoss brutto:netto 80.49 qm : 66.17 qm</span>
  <span class="cell small"></span>
  <span class="cell numlock">NUM</span>
  <span class="cell small"></span>
</footer>
</body>
</html>
```

FILE: styles.css
```css
* { box-sizing: border-box; }
body {
  margin: 0;
  height: 100vh;
  display: flex;
  flex-direction: column;
  border: solid #000;
  border-width: 13px 0;
  background: #fff;
  color: #000;
  font: 8px/12px Lato, Roboto, sans-serif;
  overflow: hidden;
}
button, select, input { font: inherit; color: inherit; margin: 0; padding: 0; border: 0; background: none; border-radius: 0; }
svg { display: block; flex: none; }
i { display: block; flex: none; }

.titlebar { display: flex; align-items: center; height: 15px; padding-left: 1px; flex: none; }
.app-icon { width: 12px; height: 12px; }
.title { margin: 0 0 0 2px; flex: 1; font: inherit; }
.win-buttons { display: flex; gap: 18px; padding-right: 11px; }
.win-buttons button { width: 12px; }
.win-buttons svg, .mdi-buttons svg { width: 12px; height: 12px; }

.menubar { display: flex; align-items: center; gap: 8px; height: 14px; flex: none; padding-left: 2px; background: #f0f0f0; }
.menu-icon { width: 12px; height: 12px; margin-right: -3px; }
.mdi-buttons { display: flex; gap: 1px; margin-left: auto; }
.mdi-buttons button { width: 12px; background: #fff; }

.toolbar { display: flex; align-items: center; height: 19px; width: 560px; flex: none; border-bottom: 1px solid #e3e3e3; }
.tool { display: flex; align-items: center; justify-content: center; width: 15px; height: 15px; flex: none; }
.tool svg { width: 12px; height: 12px; }
.tool.on { background: #cfe6f8; outline: 1px solid #5a9fcc; outline-offset: -1px; }
.drop { width: 11px; height: 15px; display: flex; align-items: center; justify-content: center; flex: none; }
.drop::before { content: ""; border: 2px solid transparent; border-top-color: #111; border-bottom: 0; }
.drop.wide { width: 12px; }
.sep { width: 4px; height: 14px; border-left: 1px solid #d5d5d5; }
.grip { width: 11px; height: 13px; background: radial-gradient(circle, #bbb 1px, transparent 1px) 3px 0 / 3px 4px repeat-y; }
.grip.first { width: 5px; background-position-x: 1px; }

.workspace { flex: 1; display: flex; min-height: 0; }
.sidebar { width: 28px; flex: none; display: flex; flex-direction: column; padding-left: 2px; overflow: hidden; }
.sidebar.right { width: 29px; padding-left: 0; }
.row { display: flex; flex: none; }
.hsep { height: 4px; border-top: 1px solid #d0d0d0; margin: 0 2px; }
.hsep.blank { border-color: transparent; }
.hgrip { height: 7px; margin: 0 1px; background: radial-gradient(circle, #bbb 1px, transparent 1px) 0 0 / 4px 3px repeat-x; }
.hgrip:first-child { height: 4px; }
.right .hsep { height: 3px; margin-right: 8px; }
.right .hgrip { height: 9px; background-position-y: 3px; margin-right: 8px; }
.right .hgrip:first-child { height: 4px; background-position-y: 0; }
.right .drop { width: 13px; }
.boxed { width: 11px; height: 11px; margin: 2px; border: 1px dashed #555; color: #1b1b74; font: bold 10px/8px "Liberation Sans", Arial, sans-serif; }
.ab { width: 11px; height: 11px; margin: 2px; border: 1px solid #222; background: #d9c3a4; font: bold 7px/9px "Liberation Sans", Arial, sans-serif; }
.text-a { font: italic bold 14px/15px "Liberation Sans", Arial, sans-serif; }

.center { flex: 1; min-width: 0; display: flex; flex-direction: column; }
.options { display: flex; align-items: center; height: 18px; flex: none; padding-left: 2px; }
.mode { width: 177px; padding-left: 73px; }
.coords { width: 127px; padding-left: 24px; }
.pick { position: relative; display: flex; height: 14px; border: 1px solid #b5b5b5; background: #e4e4e4; }
.pick select { width: 100%; appearance: none; padding: 0 12px 0 2px; line-height: 12px; }
.pick::after, .combo::after { content: ""; position: absolute; right: 4px; top: 3px; width: 4px; height: 4px; border: solid #555; border-width: 0 1px 1px 0; transform: rotate(45deg); }
.pick.white { background: #fff; border-color: #999; }
.pick.off { background: #ccc; border-color: #c4c4c4; }
.pick.off select { color: #888; opacity: 1; }
.pick.off::after { border-color: #aaa; }
.floor { width: 80px; }
.zoom { width: 51px; }

.board { flex: 1; min-height: 0; display: grid; grid-template: 12px minmax(0, 1fr) 13px / 11px minmax(0, 1fr) 12px; margin-left: 2px; border-top: 1px solid #aaa; background: #f0f0f0; }
.corner { background: #ccc; color: #777; text-align: center; line-height: 11px; }
.ruler-h { grid-column: 2 / 4; width: 100%; height: 12px; border-bottom: 1px solid #555; }
.ruler-v { grid-row: 2 / 4; width: 100%; height: 100%; border-right: 1px solid #555; }
.tick { stroke: #222; fill: none; }
.scale { font: 8px Lato, Roboto, sans-serif; fill: #000; }
.upright { font-family: Roboto, "Liberation Sans", sans-serif; }
.plan { width: 100%; height: 100%; background: #fff; }
.room { font: 22px "Liberation Sans", Arial, sans-serif; fill: #000; }
.scroll-v { display: flex; flex-direction: column; justify-content: space-between; }
.scroll-h { display: flex; grid-column: 2; justify-content: space-between; }
.scroll-v svg, .scroll-h svg { width: 11px; height: 12px; fill: none; stroke: #333; }
.thumb-v { width: 10px; height: 43px; margin: 38px 0 auto 1px; background: #cdcdcd; }
.thumb-h { width: 127px; height: 10px; margin: 1px auto 1px 0; background: #cdcdcd; }

.props { width: 185px; flex: none; border-left: 1px solid #ddd; padding: 2px 6px 5px 5px; display: flex; flex-direction: column; gap: 1px; }
.group { display: flex; align-items: center; margin: 0; height: 14px; font: inherit; }
.group::after { content: ""; margin-left: auto; width: 125px; border-top: 1px solid #c8c8c8; }
.group.wide::after { width: 103px; }
.line { display: flex; align-items: center; flex: none; }
.gap6 { gap: 6px; }
.gap4 { gap: 4px; margin-bottom: 2px; }
.grow { flex: 1; }
.btn { display: flex; align-items: center; justify-content: center; height: 14px; border: 1px solid #b0b0b0; background: #e3e3e3; flex: none; }
.btn svg { width: 12px; height: 12px; }
.layer { width: 65px; height: 13px; }
.combo { position: relative; display: flex; align-items: center; gap: 2px; height: 16px; margin: 1px 0; padding-left: 2px; border: 1px solid #a5a5a5; }
.combo::after { top: 4px; }
.combo input { width: 8px; height: 8px; appearance: none; border: 1px solid #444; display: grid; place-items: center; }
.combo input:checked::before { content: ""; width: 5px; height: 3px; border: solid #111; border-width: 0 0 1px 1px; transform: rotate(-45deg); }
.sq { width: 15px; height: 15px; }
.icons, .styles { gap: 1px; }
.icons { margin-bottom: 3px; }
.fill { flex: 1; }
.split { width: 31px; height: 15px; gap: 4px; }
.split::after { content: ""; border: 3px solid transparent; border-top: 4px solid #111; border-bottom: 0; }
.num select { padding-right: 13px; padding-left: 0; text-align: right; }
.num { width: 32px; }
.gap4 .pick { height: 15px; }
.stroke { position: absolute; left: 4px; right: 15px; top: 6px; border-top: 1px solid #333; }
.swatch { position: absolute; left: 4px; right: 15px; top: 3px; height: 7px; border: 1px solid #222; }
.font select { font-size: 9px; }
.letter b { font: bold 11px/10px "Liberation Serif", serif; border-bottom: 2px solid #111; padding: 0 2px; }
.styles { padding-left: 35px; }
.gap { width: 5px; }
.bold { font: bold 9px/12px "Liberation Serif", serif; }
.ital { font-style: italic; }
.under { text-decoration: underline; }
.strike { text-decoration: line-through; }
.angle { justify-content: flex-end; gap: 6px; margin-top: 1px; }
.angle input { width: 32px; height: 12px; border: solid #999; border-width: 1px 0 0 1px; text-align: right; padding-right: 3px; }
.help { margin-top: auto; padding-top: 4px; border-top: 1px solid #bbb; display: flex; justify-content: flex-end; }
.help .btn { width: 51px; height: 15px; gap: 9px; }

.status { height: 13px; flex: none; display: flex; gap: 2px; background: #e6e6e6; border-top: 1px solid #ddd; }
.cell { border: 1px solid #bbb; border-bottom-color: #eee; background: #f0f0f0; padding-left: 1px; line-height: 10px; white-space: nowrap; }
.total { width: 169px; }
.storey { width: 175px; }
.small { width: 13px; }
.numlock { width: 21px; }
```
